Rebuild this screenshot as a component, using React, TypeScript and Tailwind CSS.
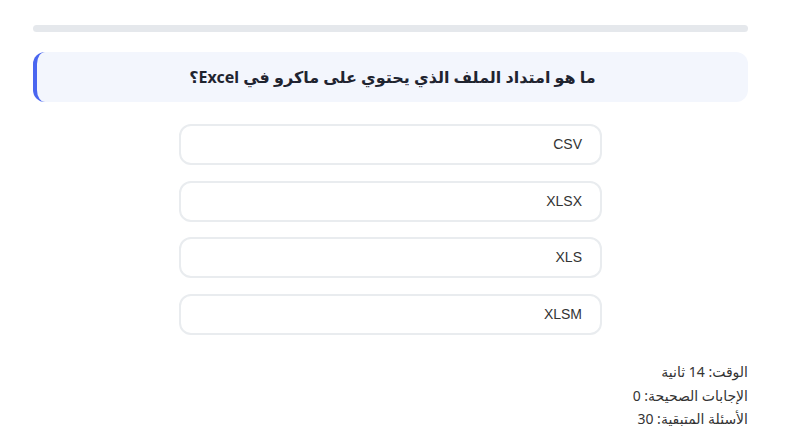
import React from "react";

export default function App() {
  const options = ["CSV", "XLSX", "XLS", "XLSM"];
  return (
    <div dir="rtl" className="w-[800px] h-[445px] bg-white" style={{ fontFamily: '"Noto Sans", "DejaVu Sans", sans-serif' }}>
      <div className="mr-[52px] w-[715px] pt-[25px]">
        <div className="h-[7px] w-full rounded-full bg-[#e5e8ec]" />
        <div className="mt-[20px] h-[50px] flex items-center justify-center rounded-[12px] border-r-0 border-l-[4px] border-[#4a66f0] bg-[#f3f6fd]">
          <h2 className="text-[16px] font-bold text-[#1f2430]">ما هو امتداد الملف الذي يحتوي على ماكرو في Excel؟</h2>
        </div>
        <div className="mt-[22px] flex flex-col items-center gap-[15.7px]">
          {options.map((o) => (
            <div
              key={o}
              className="w-[423px] h-[41px] flex items-center px-[18px] rounded-[12px] border-2 border-[#e9ecef] bg-white text-[14px] text-[#333]"
              style={{ fontFamily: '"Liberation Sans", Arial, sans-serif' }}
            >
              {o}
            </div>
          ))}
        </div>
        <div className="mt-[25px] flex flex-col text-[14px] text-[#333] leading-[23.5px]">
          <div>الوقت: 14 ثانية</div>
          <div>الإجابات الصحيحة: 0</div>
          <div>الأسئلة المتبقية: 30</div>
        </div>
      </div>
    </div>
  );
}
